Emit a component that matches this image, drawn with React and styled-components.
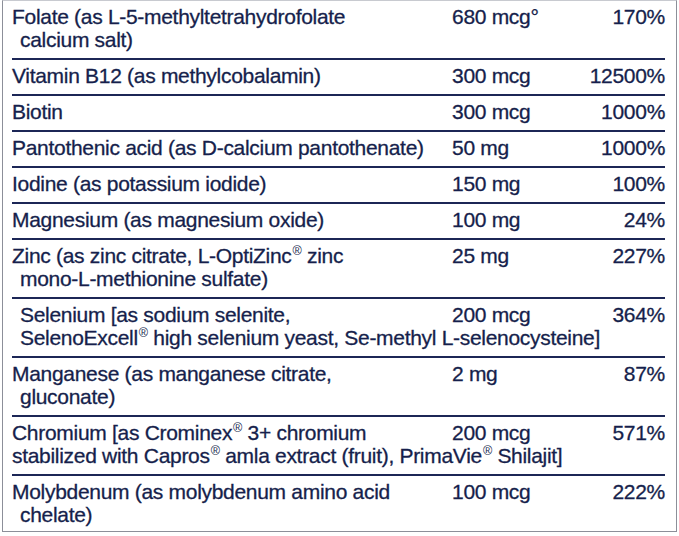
import React from "react";
import styled, { createGlobalStyle } from "styled-components";

const GlobalStyle = createGlobalStyle`
  html, body {
    margin: 0;
    padding: 0;
    background: #ffffff;
  }
  body {
    font-family: "Liberation Sans", Arial, sans-serif;
  }
`;

const R = () => <Reg>®</Reg>;

const rows = [
  {
    name: ["Folate (as L-5-methyltetrahydrofolate", "calcium salt)"],
    amount: "680 mcg°",
    dv: "170%"
  },
  { name: ["Vitamin B12 (as methylcobalamin)"], amount: "300 mcg", dv: "12500%" },
  { name: ["Biotin"], amount: "300 mcg", dv: "1000%" },
  {
    name: ["Pantothenic acid (as D-calcium pantothenate)"],
    amount: "50 mg",
    dv: "1000%"
  },
  { name: ["Iodine (as potassium iodide)"], amount: "150 mg", dv: "100%" },
  { name: ["Magnesium (as magnesium oxide)"], amount: "100 mg", dv: "24%" },
  {
    name: [
      <>
        Zinc (as zinc citrate, L-OptiZinc
        <R /> zinc
      </>,
      "mono-L-methionine sulfate)"
    ],
    amount: "25 mg",
    dv: "227%"
  },
  {
    name: [
      "Selenium [as sodium selenite,",
      <>
        SelenoExcell
        <R /> high selenium yeast, Se-methyl L-selenocysteine]
      </>
    ],
    amount: "200 mcg",
    dv: "364%",
    wide: true,
    indentAll: true
  },
  {
    name: ["Manganese (as manganese citrate,", "gluconate)"],
    amount: "2 mg",
    dv: "87%"
  },
  {
    name: [
      <>
        Chromium [as Crominex
        <R /> 3+ chromium
      </>,
      <>
        stabilized with Capros
        <R /> amla extract (fruit), PrimaVie
        <R /> Shilajit]
      </>
    ],
    amount: "200 mcg",
    dv: "571%",
    wide: true,
    noIndent: true
  },
  {
    name: ["Molybdenum (as molybdenum amino acid", "chelate)"],
    amount: "100 mcg",
    dv: "222%"
  }
];

export default function App() {
  return (
    <>
      <GlobalStyle />
      <Panel>
        {rows.map((row, i) => (
          <Row key={i} $last={i === rows.length - 1}>
            <Name $indent={row.indentAll}>{row.name[0]}</Name>
            <Amount>{row.amount}</Amount>
            <Percent>{row.dv}</Percent>
            {row.name[1] && (
              <Continued $wide={row.wide} $indent={!row.noIndent}>
                {row.name[1]}
              </Continued>
            )}
          </Row>
        ))}
      </Panel>
    </>
  );
}

const Panel = styled.div`
  margin: 0 2px;
  height: 532px;
  box-sizing: border-box;
  border: 1px solid #8c8f99;
  border-top-color: #c8cad0;
  padding: 0 11px 0 9px;
  color: #161f4c;
  font-size: 21px;
  letter-spacing: -0.3px;
  -webkit-text-stroke: 0.3px #161f4c;
`;

const Row = styled.div`
  display: grid;
  grid-template-columns: 440px 1fr auto;
  line-height: 23px;
  padding: 4px 0 7px;
  border-bottom: ${props => (props.$last ? "none" : "2px solid #1c2656")};
`;

const Name = styled.div`
  grid-column: 1;
  white-space: nowrap;
  padding-left: ${props => (props.$indent ? "8px" : "0")};
`;

const Continued = styled.div`
  grid-column: ${props => (props.$wide ? "1 / 3" : "1")};
  white-space: nowrap;
  padding-left: ${props => (props.$indent ? "8px" : "0")};
`;

const Amount = styled.div`
  grid-column: 2;
  white-space: nowrap;
`;

const Percent = styled.div`
  grid-column: 3;
  text-align: right;
  white-space: nowrap;
`;

const Reg = styled.sup`
  font-size: 0.6em;
  line-height: 0;
  vertical-align: 0.6em;
  margin-left: 1px;
  -webkit-text-stroke: 0;
`;
